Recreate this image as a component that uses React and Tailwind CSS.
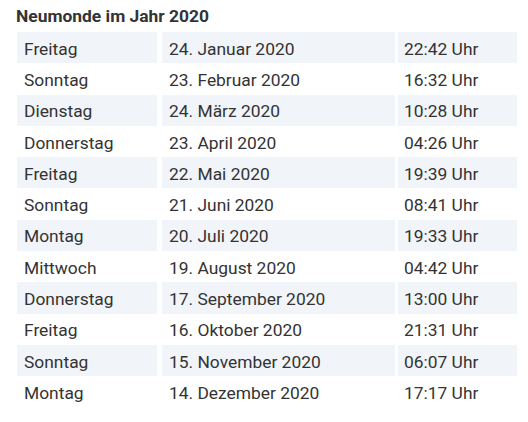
import * as React from 'react';

const rows = [
  ['Freitag', '24. Januar 2020', '22:42 Uhr'],
  ['Sonntag', '23. Februar 2020', '16:32 Uhr'],
  ['Dienstag', '24. März 2020', '10:28 Uhr'],
  ['Donnerstag', '23. April 2020', '04:26 Uhr'],
  ['Freitag', '22. Mai 2020', '19:39 Uhr'],
  ['Sonntag', '21. Juni 2020', '08:41 Uhr'],
  ['Montag', '20. Juli 2020', '19:33 Uhr'],
  ['Mittwoch', '19. August 2020', '04:42 Uhr'],
  ['Donnerstag', '17. September 2020', '13:00 Uhr'],
  ['Freitag', '16. Oktober 2020', '21:31 Uhr'],
  ['Sonntag', '15. November 2020', '06:07 Uhr'],
  ['Montag', '14. Dezember 2020', '17:17 Uhr'],
];

export default function App() {
  return (
    <div className="w-[528px] h-[422px] bg-white pl-4 pt-[6px] font-['Roboto',sans-serif] text-[#333]">
      <h2 className="text-[17.4px] leading-[21px] font-bold text-[#333]">Neumonde im Jahr 2020</h2>
      <div className="mt-[5px] ml-px w-[500px]">
        {rows.map(([day, date, time], i) => {
          const bg = i % 2 === 0 ? 'bg-[#f1f4f9]' : 'bg-white';
          return (
            <div key={i} className="flex h-[31.3px] text-[17.4px] leading-5">
              <div className={`w-[140px] pl-[7px] pt-[2px] flex items-center ${bg}`}>{day}</div>
              <div className={`w-[233px] ml-[5px] pl-[7px] pt-[2px] flex items-center ${bg}`}>{date}</div>
              <div className={`w-[119px] ml-[3px] pl-[6px] pt-[2px] flex items-center ${bg}`}>{time}</div>
            </div>
          );
        })}
      </div>
    </div>
  );
}
